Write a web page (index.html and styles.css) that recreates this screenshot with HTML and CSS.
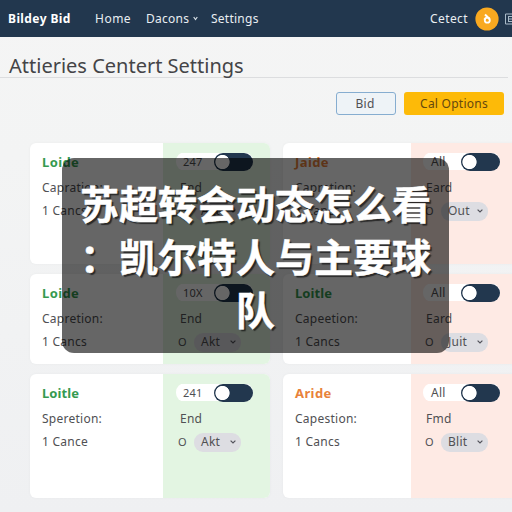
FILE: index.html
```html
<!DOCTYPE html>
<html lang="zh-CN">
<head>
<meta charset="utf-8">
<title>Settings</title>
<link rel="stylesheet" href="styles.css">
</head>
<body>
<header class="navbar">
  <span class="brand">Bildey Bid</span>
  <nav class="nav">
    <span class="nav-home">Home</span>
    <span class="nav-menu">Dacons <svg width="5" height="5" viewBox="0 0 5 5"><path d="M.7 1L2.5 3.5L4.3 1" fill="none" stroke="#dce4ea" stroke-width="1.1"/></svg></span>
    <span class="nav-settings">Settings</span>
  </nav>
  <div class="account">
    <span class="account-name">Cetect</span>
    <svg class="avatar" width="24" height="24" viewBox="0 0 24 24"><circle cx="12" cy="12" r="11.6" fill="#f9a920"/><path d="M10 7.5L14.5 12" stroke="#fff" stroke-width="2"/><circle cx="12.3" cy="13.2" r="2.5" fill="none" stroke="#fff" stroke-width="1.8"/><path d="M9 11.5L10.3 13" stroke="#fff" stroke-width="1.5"/></svg>
    <svg class="grid-icon" width="8" height="12" viewBox="0 0 8 12" fill="none" stroke="#a9bac8"><path d="M8 1H1.500V11H8M4 3.5H8M4 6H8M4 8.5H8M4.500 3.5V8.5"/></svg>
  </div>
</header>
<main class="page">
  <h1 class="title">Attieries Centert Settings</h1>
  <div class="actions">
    <span class="btn btn-outline">Bid</span>
    <span class="btn btn-primary">Cal Options</span>
  </div>
  <section class="cards">
    <article class="card">
      <div class="info"><h2 class="spaced">Loide</h2><p>Capration:</p><p>1 Cancs</p></div>
      <div class="state green"><div class="switch"><span class="num">247</span><i></i></div><p>End</p><div class="pick"><b>O</b><span class="select">Akt<svg viewBox="0 0 6 4"><path d="M.6 .6L3 3L5.400 .6"/></svg></span></div></div>
    </article>
    <article class="card">
      <div class="info"><h2 class="orange spaced">Jaide</h2><p>Capration:</p><p>1 Cancs</p></div>
      <div class="state pink"><div class="switch"><span>All</span><i></i></div><p>Eard</p><div class="pick"><b>O</b><span class="select">Out<svg viewBox="0 0 6 4"><path d="M.6 .6L3 3L5.400 .6"/></svg></span></div></div>
    </article>
    <article class="card">
      <div class="info"><h2 class="spaced">Loide</h2><p>Capretion:</p><p>1 Cancs</p></div>
      <div class="state green"><div class="switch"><span class="num">10X</span><i></i></div><p>End</p><div class="pick"><b>O</b><span class="select">Akt<svg viewBox="0 0 6 4"><path d="M.6 .6L3 3L5.400 .6"/></svg></span></div></div>
    </article>
    <article class="card">
      <div class="info"><h2>Loitle</h2><p>Capeetion:</p><p>1 Cancs</p></div>
      <div class="state pink"><div class="switch"><span>All</span><i></i></div><p>Eard</p><div class="pick"><b>O</b><span class="select">Juit<svg viewBox="0 0 6 4"><path d="M.6 .6L3 3L5.400 .6"/></svg></span></div></div>
    </article>
    <article class="card">
      <div class="info"><h2>Loitle</h2><p>Speretion:</p><p>1 Cance</p></div>
      <div class="state green"><div class="switch"><span class="num">241</span><i></i></div><p>End</p><div class="pick"><b>O</b><span class="select">Akt<svg viewBox="0 0 6 4"><path d="M.6 .6L3 3L5.400 .6"/></svg></span></div></div>
    </article>
    <article class="card">
      <div class="info"><h2 class="orange spaced">Aride</h2><p>Capestion:</p><p>1 Cancs</p></div>
      <div class="state pink"><div class="switch"><span>All</span><i></i></div><p>Fmd</p><div class="pick"><b>O</b><span class="select">Blit<svg viewBox="0 0 6 4"><path d="M.6 .6L3 3L5.400 .6"/></svg></span></div></div>
    </article>
  </section>
</main>
<div class="caption">苏超转会动态怎么看<br>：凯尔特人与主要球<br>队</div>
</body>
</html>
```
FILE: styles.css
```css
* { box-sizing: border-box; }
body {
  margin: 0;
  width: 512px;
  height: 512px;
  overflow: hidden;
  position: relative;
  background: linear-gradient(#f5f5f5, #f3f4f4 30%, #eff0f2);
  font: 12px/20px "Noto Sans", sans-serif;
  letter-spacing: .25px;
  color: #505053;
}
h1, h2, p { margin: 0; }
.navbar {
  height: 37px;
  display: flex;
  align-items: center;
  background: #22374e;
  color: #e9eef2;
  padding-left: 8px;
  overflow: hidden;
  white-space: nowrap;
}
.brand { width: 87px; font-weight: 700; font-size: 12px; letter-spacing: .4px; color: #fff; }
.nav { display: flex; }
.nav-home { width: 51px; letter-spacing: .5px; }
.nav-menu { width: 65px; }
.nav-menu svg { margin: 0 0 2px 0; }
.account { display: flex; align-items: center; margin-left: auto; flex-shrink: 0; }
.account-name { width: 45px; letter-spacing: .4px; }
.avatar { margin-right: 5px; }
.title {
  height: 41px;
  margin-right: 4px;
  padding: 14px 0 0 9px;
  border-bottom: 1px solid #dcdddf;
  font-size: 20px;
  line-height: 30px;
  letter-spacing: 0;
  font-weight: 400;
  color: #444447;
  white-space: nowrap;
}
.actions { display: flex; justify-content: flex-end; gap: 8px; padding: 14px 8px 0 0; }
.btn { height: 23px; border-radius: 3px; line-height: 24px; text-align: center; }
.btn-outline { width: 60px; line-height: 22px; padding-right: 2px; border: 1px solid #86add0; background: #eef3f7; }
.btn-primary { width: 100px; background: #fdba08; color: #65480f; }
.cards {
  display: grid;
  grid-template-columns: 240px 240px;
  grid-template-rows: 121px 90px 124px;
  gap: 10px 13px;
  margin: 28px 0 0 30px;
}
.card {
  display: grid;
  grid-template-columns: 133px 1fr;
  border-radius: 6px;
  overflow: hidden;
  background: #fff;
  box-shadow: 0 0 3px rgba(80, 90, 100, .05);
}
.card:nth-child(even) { grid-template-columns: 128px 1fr; }
.info, .state { padding: 9px 0 0 12px; }
.info h2 { height: 20px; margin-bottom: 6px; font-size: 13px; line-height: 20px; font-weight: 700; letter-spacing: .1px; color: #359a50; }
.info h2.spaced { letter-spacing: .4px; }
.info h2.orange { color: #e8823a; }
.info p { margin-bottom: 3px; }
.green { background: #e3f5e2; padding-left: 13px; }
.pink { background: #feeae4; }
.switch { display: flex; width: 77px; height: 19px; align-items: center; background: linear-gradient(#fff, #fff) center / 100% 17px no-repeat; border-radius: 9px; }
.switch span { flex: 1; padding: 1px 0 0 8px; }
.switch .num { padding-left: 7px; font-size: 11px; }
.switch i { width: 39px; height: 18px; border-radius: 9px; background: radial-gradient(circle at 8.5px 9px, #fff 6.7px, #22374e 7.500px); }
.state p { margin: 7px 0 3px 4px; }
.pink p { margin-left: 3px; }
.pick { display: flex; align-items: center; height: 20px; padding-left: 2px; }
.pick b { width: 16px; font-weight: 400; font-size: 11px; }
.select { display: flex; align-items: center; justify-content: space-between; width: 47px; height: 19px; padding: 0 5px 0 7px; border-radius: 9px; background: #dddde2; }
.select svg { width: 6px; height: 4px; fill: none; stroke: #55555d; stroke-width: 1.2; }
.caption {
  position: absolute;
  left: 62px;
  top: 158px;
  width: 387px;
  height: 195px;
  padding-top: 18px;
  border-radius: 12px;
  background: rgba(0, 0, 0, .6);
  color: #fff;
  text-align: center;
  white-space: nowrap;
  font: 700 39px/53px "Noto Sans CJK SC", sans-serif;
  letter-spacing: 0;
  -webkit-text-stroke: .5px #fff;
  text-shadow: 2px 2px 1px rgba(0, 0, 0, .6);
}
```
